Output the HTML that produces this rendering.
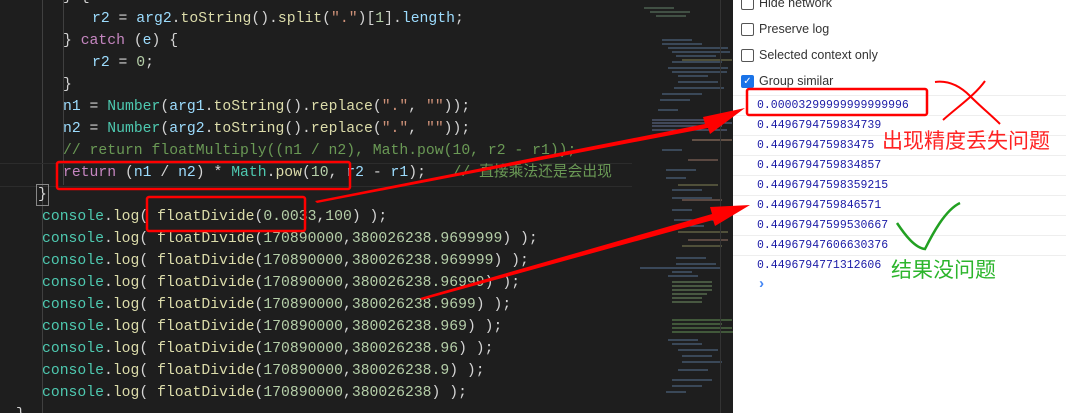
<!DOCTYPE html>
<html><head><meta charset="utf-8"><style>
html,body{margin:0;width:1066px;height:413px;overflow:hidden}
body{background:#1e1e1e;position:relative;font-family:"Liberation Mono",monospace}
.code{position:absolute;left:0;top:0;width:632px;height:413px;}
.l{position:absolute;white-space:pre;font-size:14.75px;line-height:22px;color:#d4d4d4}
.v{color:#9cdcfe}.f{color:#dcdcaa}.c{color:#4ec9b0}.k{color:#c586c0}.s{color:#ce9178}.n{color:#b5cea8}.cm{color:#6a9955}
.guide{position:absolute;width:1px;background:#404040}
.mini{position:absolute;left:632px;top:0;width:101px;height:413px;background:#1e1e1e}
.con{position:absolute;left:733px;top:0;width:333px;height:413px;background:#fff;font-family:"Liberation Sans",sans-serif}
.cb{position:absolute;left:8px;width:11px;height:11px;border:1px solid #555;border-radius:2px;background:#fff}
.cl{position:absolute;left:26px;font-size:12.5px;color:#333}
.row{position:absolute;left:0;width:333px;height:20px;border-top:1px solid #eee;font-family:"Liberation Mono",monospace;font-size:11.5px;color:#1a1aa6;line-height:20px;padding-left:24px;box-sizing:border-box}
.ann{position:absolute;font-family:"Liberation Sans","Noto Sans CJK SC",sans-serif;font-size:21px;line-height:24px}
</style></head><body>
<div class="code">
<div class="guide" style="left:63px;top:0;height:185px"></div>
<div class="guide" style="left:42px;top:0;height:413px"></div>
<div style="position:absolute;left:0;top:163px;width:632px;height:22px;border-top:1px solid #2c2c2c;border-bottom:1px solid #2c2c2c"></div>
<div class="l" style="left:63px;top:-14px">} {</div>
<div class="l" style="left:92px;top:8px"><span class="v">r2</span> = <span class="v">arg2</span>.<span class="f">toString</span>().<span class="f">split</span>(<span class="s">"."</span>)[<span class="n">1</span>].<span class="v">length</span>;</div>
<div class="l" style="left:63px;top:30px">} <span class="k">catch</span> (<span class="v">e</span>) {</div>
<div class="l" style="left:92px;top:52px"><span class="v">r2</span> = <span class="n">0</span>;</div>
<div class="l" style="left:63px;top:74px">}</div>
<div class="l" style="left:63px;top:96px"><span class="v">n1</span> = <span class="c">Number</span>(<span class="v">arg1</span>.<span class="f">toString</span>().<span class="f">replace</span>(<span class="s">"."</span>, <span class="s">""</span>));</div>
<div class="l" style="left:63px;top:118px"><span class="v">n2</span> = <span class="c">Number</span>(<span class="v">arg2</span>.<span class="f">toString</span>().<span class="f">replace</span>(<span class="s">"."</span>, <span class="s">""</span>));</div>
<div class="l cm" style="left:63px;top:140px">// return floatMultiply((n1 / n2), Math.pow(10, r2 - r1));</div>
<div class="l" style="left:63px;top:162px"><span class="k">return</span> (<span class="v">n1</span> / <span class="v">n2</span>) * <span class="c">Math</span>.<span class="f">pow</span>(<span class="n">10</span>, <span class="v">r2</span> - <span class="v">r1</span>);   <span class="cm" style="font-family:'Liberation Mono','Noto Sans CJK SC',monospace">// 直接乘法还是会出现</span></div>
<div class="l" style="left:36px;top:184px;border:1px solid #888;line-height:20px;padding:0 1px">}</div>
<div class="l" style="left:42px;top:206px"><span class="c">console</span>.<span class="f">log</span>( <span class="f">floatDivide</span>(<span class="n">0.0033</span>,<span class="n">100</span>) );</div>
<div class="l" style="left:42px;top:228px"><span class="c">console</span>.<span class="f">log</span>( <span class="f">floatDivide</span>(<span class="n">170890000</span>,<span class="n">380026238.9699999</span>) );</div>
<div class="l" style="left:42px;top:250px"><span class="c">console</span>.<span class="f">log</span>( <span class="f">floatDivide</span>(<span class="n">170890000</span>,<span class="n">380026238.969999</span>) );</div>
<div class="l" style="left:42px;top:272px"><span class="c">console</span>.<span class="f">log</span>( <span class="f">floatDivide</span>(<span class="n">170890000</span>,<span class="n">380026238.96999</span>) );</div>
<div class="l" style="left:42px;top:294px"><span class="c">console</span>.<span class="f">log</span>( <span class="f">floatDivide</span>(<span class="n">170890000</span>,<span class="n">380026238.9699</span>) );</div>
<div class="l" style="left:42px;top:316px"><span class="c">console</span>.<span class="f">log</span>( <span class="f">floatDivide</span>(<span class="n">170890000</span>,<span class="n">380026238.969</span>) );</div>
<div class="l" style="left:42px;top:338px"><span class="c">console</span>.<span class="f">log</span>( <span class="f">floatDivide</span>(<span class="n">170890000</span>,<span class="n">380026238.96</span>) );</div>
<div class="l" style="left:42px;top:360px"><span class="c">console</span>.<span class="f">log</span>( <span class="f">floatDivide</span>(<span class="n">170890000</span>,<span class="n">380026238.9</span>) );</div>
<div class="l" style="left:42px;top:382px"><span class="c">console</span>.<span class="f">log</span>( <span class="f">floatDivide</span>(<span class="n">170890000</span>,<span class="n">380026238</span>) );</div>
<div class="l" style="left:16px;top:404px">}</div>
</div>
<div class="mini">
<svg width="101" height="413">
<g stroke-width="1.3" opacity=".75">
<path stroke="#6a8a70" d="M12 8h30M18 12h40M24 16h30"/>
<path stroke="#5a7a9a" d="M30 40h30M30 44h40M36 48h60M40 52h58M44 56h40M40 62h50M36 68h60M40 72h55M46 76h30M46 82h40M42 88h50M30 94h40M28 100h30"/>
<path stroke="#8a8a5a" d="M50 60h50M60 140h40M46 185h40M46 232h50M50 246h40"/>
<path stroke="#6a7aa0" d="M20 120h70M20 123h80M20 126h70M20 130h75"/>
<path stroke="#a07a6a" d="M60 140h40M56 160h30M50 200h40M56 240h40"/>
<path stroke="#5a7a9a" d="M26 110h20M30 150h20M34 170h30M34 178h20M40 190h30M40 198h40M40 210h20M42 220h50M42 226h30M44 258h30M44 264h40M40 272h20M36 276h30"/>
<path stroke="#5a7aa0" d="M8 268h80"/>
<path stroke="#7a9a6a" d="M40 282h40M40 286h40M40 290h40M40 294h35M40 298h30M40 302h30"/>
<path stroke="#6a9a5a" d="M40 320h60M40 324h50M40 328h60M40 332h90"/>
<path stroke="#5a7a9a" d="M36 340h30M40 344h30M46 350h40M50 356h30M50 362h40M46 370h30M40 380h40M40 386h30M34 392h20"/>
</g>
<rect x="88" y="0" width="1" height="413" fill="#333"/>
</svg>
</div>
<div class="con">
<div class="cb" style="top:-3px"></div><div class="cl" style="top:-4px">Hide network</div>
<div class="cb" style="top:23px"></div><div class="cl" style="top:22px">Preserve log</div>
<div class="cb" style="top:49px"></div><div class="cl" style="top:48px">Selected context only</div>
<div class="cb" style="top:75px;background:#1a73e8;border-color:#1a73e8;color:#fff;font-size:10px;line-height:11px;text-align:center">✓</div><div class="cl" style="top:74px">Group similar</div>
<div class="row" style="top:95px">0.00003299999999999996</div>
<div class="row" style="top:115px">0.4496794759834739</div>
<div class="row" style="top:135px">0.449679475983475</div>
<div class="row" style="top:155px">0.4496794759834857</div>
<div class="row" style="top:175px">0.44967947598359215</div>
<div class="row" style="top:195px">0.4496794759846571</div>
<div class="row" style="top:215px">0.44967947599530667</div>
<div class="row" style="top:235px">0.44967947606630376</div>
<div class="row" style="top:255px">0.4496794771312606</div>
<div class="row" style="top:275px;color:#4285f4;font-size:15px;font-weight:bold;border:none">›</div>
</div>
<svg style="position:absolute;left:0;top:0" width="1066" height="413">
<g fill="none" stroke="#f00" stroke-width="2.5">
<rect x="57" y="162" width="293" height="27" rx="2"/>
<rect x="147" y="197" width="158" height="34" rx="2"/>
<rect x="747" y="89" width="180" height="26" rx="2"/>
<path d="M935 82 C950 80 962 88 970 96 C980 106 992 116 1000 124" stroke-width="2"/>
<path d="M985 81 C975 95 960 105 943 120" stroke-width="2"/>
</g>
<polygon fill="#f00" points="315,201 705,124 703,117 745,108 710,134 708,128 317,203"/>
<polygon fill="#f00" points="420,298 712,214 710,207 750,205 715,226 713,220 422,300"/>
<path d="M897 223 C905 235 915 248 925 249 C932 235 945 210 960 203" fill="none" stroke="#22a022" stroke-width="2.5"/>
</svg>
<div class="ann" style="left:882px;top:130px;color:#f22">出现精度丢失问题</div>
<div class="ann" style="left:891px;top:259px;color:#2cb52c">结果没问题</div>
</body></html>
